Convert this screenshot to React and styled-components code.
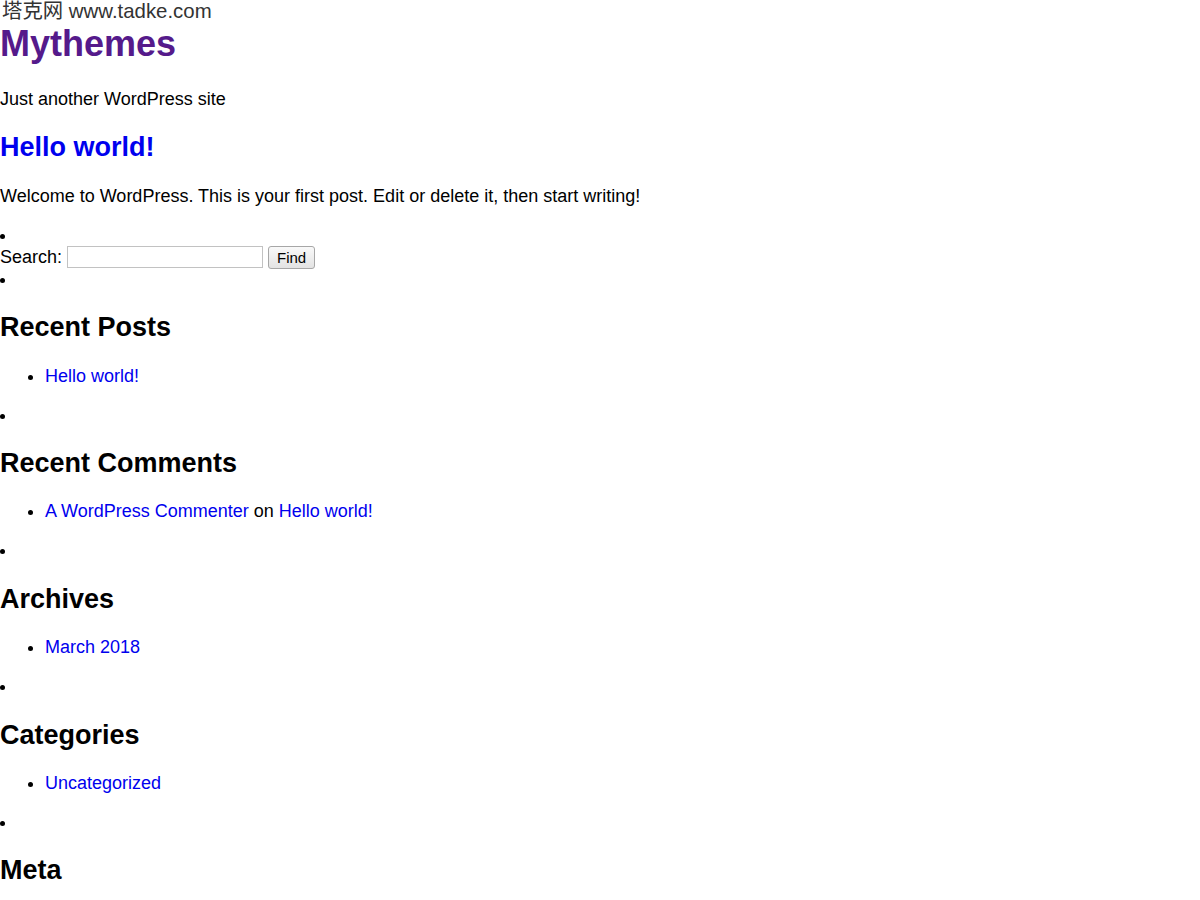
import React from "react";
import styled, { createGlobalStyle } from "styled-components";

const GlobalStyle = createGlobalStyle`
  html, body {
    margin: 0;
    padding: 0;
    background: #fff;
  }
  body {
    font-family: "Liberation Sans", Arial, sans-serif;
    font-size: 18px;
    color: #000;
  }
`;

const Page = styled.div`
  min-height: 900px;
`;

const TopLine = styled.div`
  padding-left: 2px;
  font-family: "Liberation Sans", Arial, "Noto Sans CJK SC", sans-serif;
  font-size: 20.4px;
  line-height: 23px;
  color: #333;
`;

const SiteTitle = styled.h1`
  font-size: 36px;
  font-weight: bold;
  margin: 0 0 24px;
`;

const Link = styled.a`
  color: ${props => (props.$visited ? "#551a8b" : "#0000ee")};
  text-decoration: none;
  cursor: pointer;
`;

const Text = styled.p`
  margin: 18px 0;
`;

const PostTitle = styled.h2`
  font-size: 27px;
  font-weight: bold;
  margin: 22.4px 0;
`;

const Sidebar = styled.ul`
  margin: 18px 0;
  padding: 0;
  list-style: disc inside;
`;

const Widget = styled.li``;

const WidgetTitle = styled.h2`
  font-size: 27px;
  font-weight: bold;
  margin: 22.4px 0;
`;

const WidgetList = styled.ul`
  margin: 18px 0;
  padding-left: 45px;
  list-style: disc outside;
`;

const SearchForm = styled.form`
  display: block;
  margin: 0;
`;

const SearchInput = styled.input`
  box-sizing: border-box;
  width: 196px;
  height: 22px;
  margin: 0;
  padding: 1px 3px;
  border: 1px solid #c2c2c2;
  border-radius: 0;
  font: 15px "Liberation Sans", Arial, sans-serif;
`;

const SearchButton = styled.button`
  box-sizing: border-box;
  width: 47px;
  height: 23px;
  margin: 0;
  padding: 0 6px;
  border: 1px solid #a7a7a7;
  border-radius: 3px;
  background: linear-gradient(#f9f9f9, #e3e3e3);
  font: 15px "Liberation Sans", Arial, sans-serif;
  color: #000;
`;

const widgets = [
  {
    title: "Recent Posts",
    items: [[{ text: "Hello world!" }]]
  },
  {
    title: "Recent Comments",
    items: [[{ text: "A WordPress Commenter" }, { plain: " on " }, { text: "Hello world!" }]]
  },
  {
    title: "Archives",
    items: [[{ text: "March 2018" }]]
  },
  {
    title: "Categories",
    items: [[{ text: "Uncategorized" }]]
  },
  {
    title: "Meta",
    items: [
      [{ text: "Log in" }],
      [{ text: "Entries RSS" }],
      [{ text: "Comments RSS" }],
      [{ text: "WordPress.org" }]
    ]
  }
];

export default function App() {
  return (
    <Page>
      <GlobalStyle />
      <TopLine>塔克网 www.tadke.com</TopLine>

      <SiteTitle>
        <Link $visited>Mythemes</Link>
      </SiteTitle>
      <Text>Just another WordPress site</Text>

      <PostTitle>
        <Link>Hello world!</Link>
      </PostTitle>
      <Text>Welcome to WordPress. This is your first post. Edit or delete it, then start writing!</Text>

      <Sidebar>
        <Widget>
          <SearchForm onSubmit={e => e.preventDefault()}>
            <label>Search: </label>
            <SearchInput type="text" />{" "}
            <SearchButton type="submit">Find</SearchButton>
          </SearchForm>
        </Widget>
        {widgets.map(w => (
          <Widget key={w.title}>
            <WidgetTitle>{w.title}</WidgetTitle>
            <WidgetList>
              {w.items.map((parts, i) => (
                <li key={i}>
                  {parts.map((p, j) =>
                    p.plain ? <span key={j}>{p.plain}</span> : <Link key={j}>{p.text}</Link>
                  )}
                </li>
              ))}
            </WidgetList>
          </Widget>
        ))}
      </Sidebar>
    </Page>
  );
}
